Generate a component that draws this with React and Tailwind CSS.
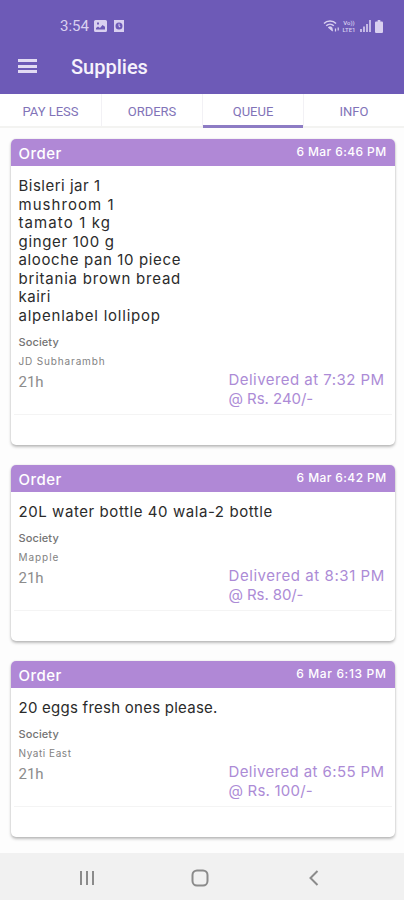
import React, { useState } from 'react';

const TABS = ['PAY LESS', 'ORDERS', 'QUEUE', 'INFO'];

const ORDERS = [
  {
    id: 1,
    date: '6 Mar 6:46 PM',
    dateTracking: 'tracking-[0.4px]',
    items: [
      { text: 'Bisleri jar 1', tracking: 'tracking-[0.5px]' },
      { text: 'mushroom 1', tracking: 'tracking-[1.05px]' },
      { text: 'tamato 1 kg', tracking: 'tracking-[1.1px]' },
      { text: 'ginger 100 g', tracking: 'tracking-[0.68px]' },
      { text: 'alooche pan 10 piece', tracking: 'tracking-[0.63px]' },
      { text: 'britania brown bread', tracking: 'tracking-[0.78px]' },
      { text: 'kairi', tracking: 'tracking-[0.5px]' },
      { text: 'alpenlabel lollipop', tracking: 'tracking-[0.77px]' },
    ],
    society: 'JD Subharambh',
    societyTracking: 'tracking-[0.85px]',
    age: '21h',
    delivered: 'Delivered at 7:32 PM',
    deliveredTracking: 'tracking-[0.46px]',
    price: '@ Rs. 240/-',
    priceTracking: 'tracking-[-0.05px]',
  },
  {
    id: 2,
    date: '6 Mar 6:42 PM',
    dateTracking: 'tracking-[0.4px]',
    items: [{ text: '20L water bottle 40 wala-2 bottle', tracking: 'tracking-[0.57px]' }],
    society: 'Mapple',
    societyTracking: 'tracking-[0.95px]',
    age: '21h',
    delivered: 'Delivered at 8:31 PM',
    deliveredTracking: 'tracking-[0.56px]',
    price: '@ Rs. 80/-',
    priceTracking: 'tracking-[-0.1px]',
  },
  {
    id: 3,
    date: '6 Mar 6:13 PM',
    dateTracking: 'tracking-[0.65px]',
    items: [{ text: '20 eggs fresh ones please.', tracking: 'tracking-[0.25px]' }],
    society: 'Nyati East',
    societyTracking: 'tracking-[0.55px]',
    age: '21h',
    delivered: 'Delivered at 6:55 PM',
    deliveredTracking: 'tracking-[0.4px]',
    price: '@ Rs. 100/-',
    priceTracking: 'tracking-[0.2px]',
  },
];

// Android status bar
const StatusBar = () => (
  <div className="flex h-[52px] items-center justify-between pr-[21px] pl-[60px] text-[#d9d0f0]">
    <div className="flex items-center">
      <span className="w-[34px] font-[Roboto,sans-serif] text-[15px] leading-none whitespace-nowrap">3:54</span>
      <svg className="h-[12px] w-[13px]" viewBox="0 0 13 12" fill="currentColor">
        <path fillRule="evenodd" d="M1.5 0h10A1.5 1.5 0 0 1 13 1.5v9a1.5 1.5 0 0 1-1.5 1.5h-10A1.5 1.5 0 0 1 0 10.5v-9A1.5 1.5 0 0 1 1.5 0zM2 9.5h9V6.8L8.5 5 6 8 4 6.5 2 8zM3 2.5v2h2v-2z" />
      </svg>
      <svg className="ml-[7px] h-[12px] w-[10px]" viewBox="0 0 10 12" fill="currentColor">
        <path fillRule="evenodd" d="M0 0h10v12H0zM5 2.5a3.5 3.5 0 1 0 0 7 3.5 3.5 0 0 0 0-7zM4.5 3.8h1v2l1 .8-.6.8-1.4-1.1z" />
      </svg>
    </div>
    <div className="flex items-center">
      <svg className="h-[14px] w-[17px]" viewBox="0 0 17 14" fill="none" stroke="currentColor">
        <path d="M1 4.500C4 1.300 10 1.300 13 4.500" strokeWidth="1.5" />
        <path d="M3.200 6.700c2.200-2 5.400-2 7.600 0" strokeWidth="1.5" />
        <path d="M5.200 8.500c1.200-1 2.500-1 3.800 0L9.500 12z" fill="currentColor" strokeWidth="0.8" />
        <path d="M12.500 9.500v3M15.200 8.500v3" strokeWidth="1.2" />
      </svg>
      <span className="ml-[1px] flex w-[16px] flex-col items-center font-[Roboto,sans-serif] text-[6px] leading-[7px] font-medium">
        <span>Vo))</span>
        <span>LTE1</span>
      </span>
      <svg className="ml-[2px] h-[12px] w-[12px]" viewBox="0 0 12 12" stroke="currentColor" strokeWidth="1.6">
        <path d="M2 12V9M5 12V6.500M8 12V4M11 12V0" />
      </svg>
      <svg className="ml-[4px] h-[13px] w-[8px]" viewBox="0 0 9 13" preserveAspectRatio="none" fill="currentColor">
        <path d="M3 0h3v1.500h1.800A1.200 1.200 0 0 1 9 2.700v9.100A1.200 1.200 0 0 1 7.800 13H1.200A1.200 1.200 0 0 1 0 11.800V2.700a1.200 1.200 0 0 1 1.200-1.200H3z" />
      </svg>
    </div>
  </div>
);

const AppBar = () => (
  <div className="flex h-[42px] items-center pb-[14px] pl-[18px]">
    <button className="flex h-[14px] w-[19px] flex-col justify-between" aria-label="Menu">
      <span className="h-[3px] w-full bg-[#e2dbf3]" />
      <span className="h-[3px] w-full bg-[#e2dbf3]" />
      <span className="h-[3px] w-full bg-[#e2dbf3]" />
    </button>
    <h1 className="ml-[34px] pt-[2px] font-[Roboto,sans-serif] text-[20px] leading-[24px] font-medium text-[#f6f2fc]">Supplies</h1>
  </div>
);

const TabBar = ({ active, onChange }) => (
  <div className="grid h-[34px] grid-cols-4 border-b-2 border-[#f3f3f1] bg-white">
    {TABS.map((tab, i) => (
      <button
        key={tab}
        onClick={() => onChange(tab)}
        className={`relative pt-[3px] font-[Roboto,sans-serif] text-[13px] leading-[29px] text-[#8173b8] ${i > 0 ? 'border-l border-[#f2f1f5]' : ''}`}
      >
        {tab}
        {tab === active && <span className="absolute inset-x-0 -bottom-[2px] h-[3px] bg-[#8d7cc4]" />}
      </button>
    ))}
  </div>
);

const OrderCard = ({ order }) => (
  <div className="overflow-hidden rounded-[5px] bg-white shadow-[0_2px_3px_rgba(0,0,0,0.25),0_0_2px_rgba(0,0,0,0.12)]">
    <div className="flex h-[26.5px] justify-between bg-[#b088d6] px-[8px] text-white">
      <span className="pt-[1px] text-[15px] leading-[28px] font-medium tracking-[0.5px]">Order</span>
      <span className={`text-[12px] leading-[26px] font-medium ${order.dateTracking}`}>{order.date}</span>
    </div>
    <div className="px-[8px] pt-[11.5px]">
      <div className="text-[15px] leading-[18.57px] text-[#2b2b2b]">
        {order.items.map((item) => (
          <p key={item.text} className={`whitespace-nowrap ${item.tracking}`}>{item.text}</p>
        ))}
      </div>
      <div className="mt-[6.5px] flex h-[82px] justify-between">
        <div>
          <p className="text-[11px] leading-[20px] font-medium tracking-[0.1px] text-[#747474]">Society</p>
          <p className={`text-[10px] leading-[19px] text-[#828282] ${order.societyTracking}`}>{order.society}</p>
          <p className="font-[Roboto,sans-serif] text-[15px] leading-[22px] text-[#8c8c8c]">{order.age}</p>
        </div>
        <div className="w-[158px] pt-[39px] text-[15px] leading-[18.5px] whitespace-nowrap text-[#ac8bd6]">
          <p className={order.deliveredTracking}>{order.delivered}</p>
          <p className={order.priceTracking}>{order.price}</p>
        </div>
      </div>
    </div>
    <div className="mx-[3px] h-[31px] border-t border-[#f4f4f4]" />
  </div>
);

const NavigationBar = () => (
  <div className="flex h-[47px] items-center bg-[#f1f1f1] pt-[2px] text-[#8b8b8b]">
    <svg className="ml-[78px] h-[16px] w-[17px]" viewBox="0 0 17 16" stroke="currentColor" strokeWidth="2">
      <path d="M3 1v14M9 1v14M15 1v14" />
    </svg>
    <svg className="ml-[96px] h-[18px] w-[18px]" viewBox="0 0 18 18" fill="none" stroke="currentColor" strokeWidth="2">
      <rect x="1.500" y="1.500" width="15" height="15" rx="4.500" />
    </svg>
    <svg className="ml-[99px] h-[16px] w-[12px]" viewBox="0 0 12 16" fill="none" stroke="currentColor" strokeWidth="2">
      <path d="M9.500 1 2.500 8l7 7" />
    </svg>
  </div>
);

export default function App() {
  const [activeTab, setActiveTab] = useState('QUEUE');

  return (
    <div className="flex h-[900px] w-[404px] flex-col overflow-hidden bg-[#fdfdfd] font-[Inter,sans-serif]">
      <header className="bg-[#6d5ab7]">
        <StatusBar />
        <AppBar />
      </header>
      <TabBar active={activeTab} onChange={setActiveTab} />
      <main className="flex flex-1 flex-col gap-[20px] pt-[11px] pr-[9.5px] pl-[10.5px]">
        {ORDERS.map((order) => (
          <OrderCard key={order.id} order={order} />
        ))}
      </main>
      <NavigationBar />
    </div>
  );
}
